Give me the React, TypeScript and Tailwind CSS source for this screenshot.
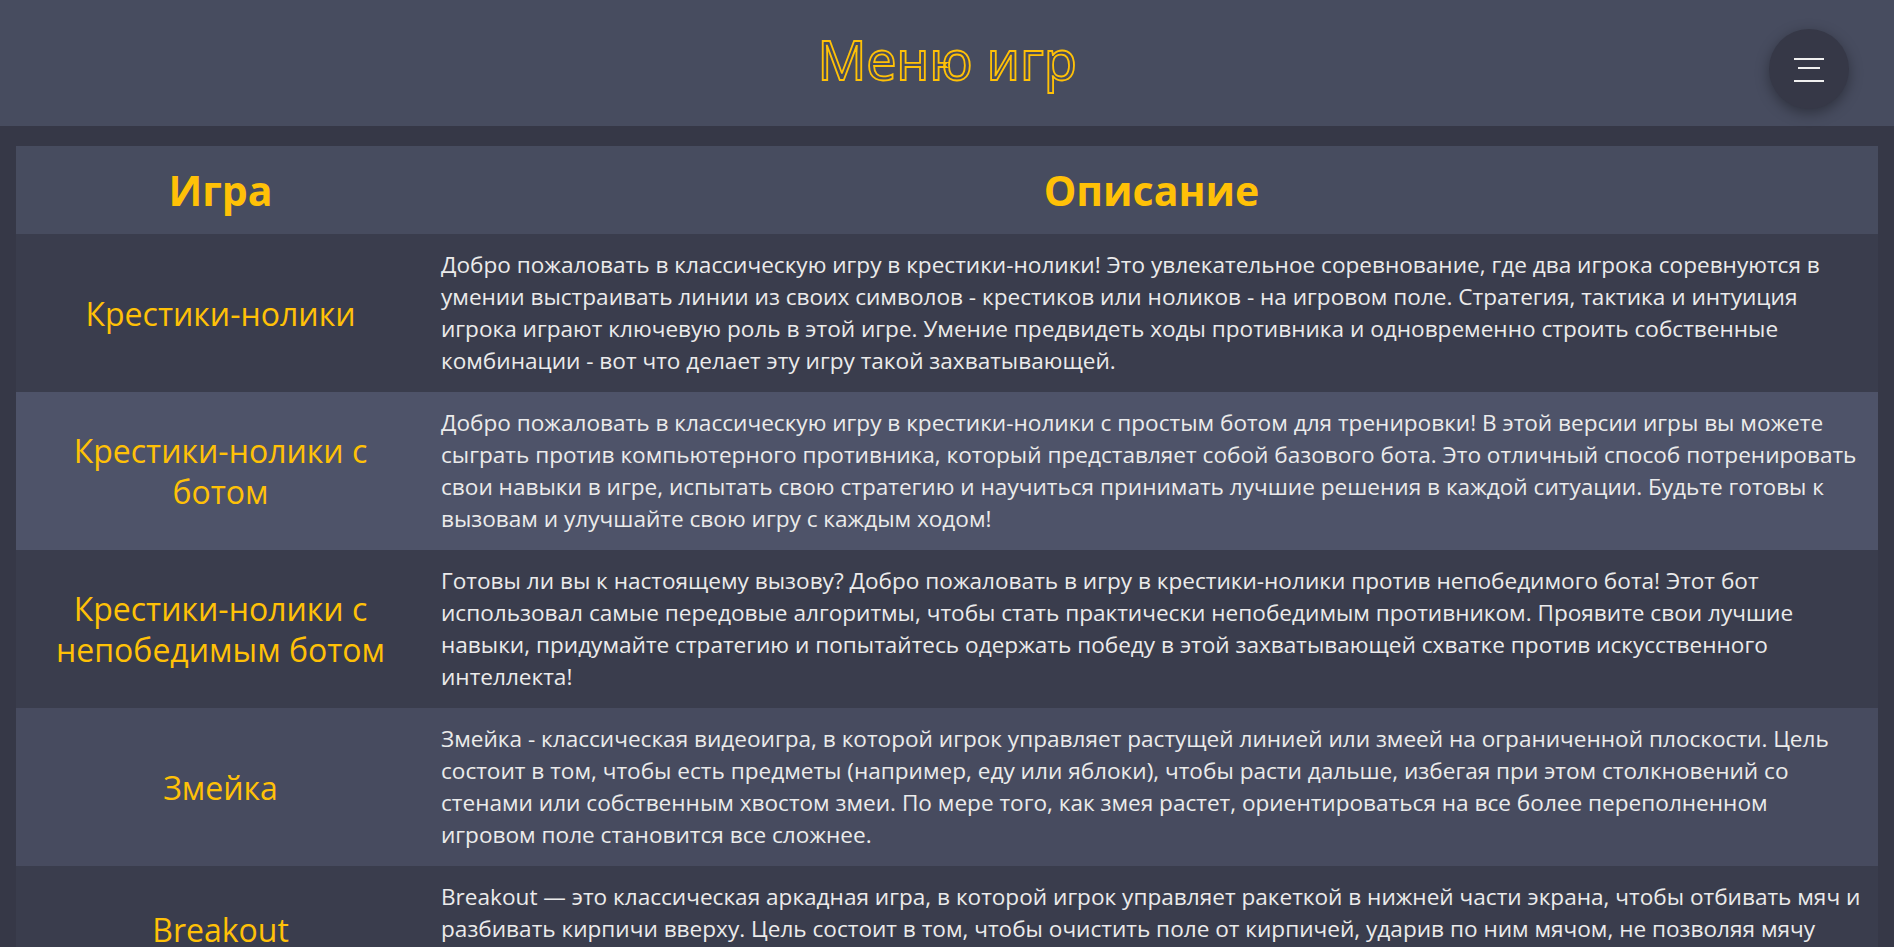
import React from "react";

type Row = { name: string; lines: string[]; bg: string };

const rows: Row[] = [
  {
    name: "Крестики-нолики",
    bg: "bg-[#3a3d4d]",
    lines: [
      "Добро пожаловать в классическую игру в крестики-нолики! Это увлекательное соревнование, где два игрока соревнуются в",
      "умении выстраивать линии из своих символов - крестиков или ноликов - на игровом поле. Стратегия, тактика и интуиция",
      "игрока играют ключевую роль в этой игре. Умение предвидеть ходы противника и одновременно строить собственные",
      "комбинации - вот что делает эту игру такой захватывающей.",
    ],
  },
  {
    name: "Крестики-нолики с ботом",
    bg: "bg-[#4e5369]",
    lines: [
      "Добро пожаловать в классическую игру в крестики-нолики с простым ботом для тренировки! В этой версии игры вы можете",
      "сыграть против компьютерного противника, который представляет собой базового бота. Это отличный способ потренировать",
      "свои навыки в игре, испытать свою стратегию и научиться принимать лучшие решения в каждой ситуации. Будьте готовы к",
      "вызовам и улучшайте свою игру с каждым ходом!",
    ],
  },
  {
    name: "Крестики-нолики с непобедимым ботом",
    bg: "bg-[#3a3d4d]",
    lines: [
      "Готовы ли вы к настоящему вызову? Добро пожаловать в игру в крестики-нолики против непобедимого бота! Этот бот",
      "использовал самые передовые алгоритмы, чтобы стать практически непобедимым противником. Проявите свои лучшие",
      "навыки, придумайте стратегию и попытайтесь одержать победу в этой захватывающей схватке против искусственного",
      "интеллекта!",
    ],
  },
  {
    name: "Змейка",
    bg: "bg-[#474b5f]",
    lines: [
      "Змейка - классическая видеоигра, в которой игрок управляет растущей линией или змеей на ограниченной плоскости. Цель",
      "состоит в том, чтобы есть предметы (например, еду или яблоки), чтобы расти дальше, избегая при этом столкновений со",
      "стенами или собственным хвостом змеи. По мере того, как змея растет, ориентироваться на все более переполненном",
      "игровом поле становится все сложнее.",
    ],
  },
  {
    name: "Breakout",
    bg: "bg-[#3a3d4d]",
    lines: [
      "Breakout — это классическая аркадная игра, в которой игрок управляет ракеткой в нижней части экрана, чтобы отбивать мяч и",
      "разбивать кирпичи вверху. Цель состоит в том, чтобы очистить поле от кирпичей, ударив по ним мячом, не позволяя мячу",
      "упасть ниже ракетки. С каждым уровнем игра становится быстрее и сложнее.",
    ],
  },
];

export default function App() {
  return (
    <div className="min-h-screen bg-[#363847] font-['Open_Sans','Noto_Sans',sans-serif]">
      <header className="relative flex h-[126px] items-center justify-center bg-[#474c5f]">
        <h1 className="mt-[-8px] font-['Noto_Sans','Open_Sans',sans-serif] text-[54px] leading-none text-transparent [-webkit-text-stroke:1.8px_#ffc107]">
          Меню игр
        </h1>
        <button className="absolute right-[45px] top-[29px] flex h-[80px] w-[80px] flex-col items-center rounded-full bg-[#363847] shadow-[0_4px_14px_rgba(0,0,0,0.35)]">
          <span className="mt-[29px] block h-[2px] w-[30px] bg-[#f0f0f0]" />
          <span className="mt-[7px] block h-[2px] w-[22px] bg-[#f0f0f0]" />
          <span className="mt-[11px] block h-[2px] w-[30px] bg-[#f0f0f0]" />
        </button>
      </header>
      <main className="px-4 pt-5">
        <div className="grid grid-cols-[409px_1fr]">
          <div className="flex items-center justify-center bg-[#474c5f] py-[15px] text-[41px] font-bold leading-[58px] text-[#ffc107]">
            Игра
          </div>
          <div className="flex items-center justify-center bg-[#474c5f] py-[15px] text-[41px] font-bold leading-[58px] text-[#ffc107]">
            Описание
          </div>
          {rows.map((r) => (
            <React.Fragment key={r.name}>
              <div
                className={`flex items-center justify-center px-4 text-center text-[32px] leading-[41px] text-[#ffc107] ${r.bg}`}
              >
                {r.name}
              </div>
              <div
                className={`whitespace-nowrap px-4 py-[15px] text-[22.6px] leading-[32px] text-[#ebebeb] ${r.bg}`}
              >
                {r.lines.map((l, i) => (
                  <div key={i}>{l}</div>
                ))}
              </div>
            </React.Fragment>
          ))}
        </div>
      </main>
    </div>
  );
}
